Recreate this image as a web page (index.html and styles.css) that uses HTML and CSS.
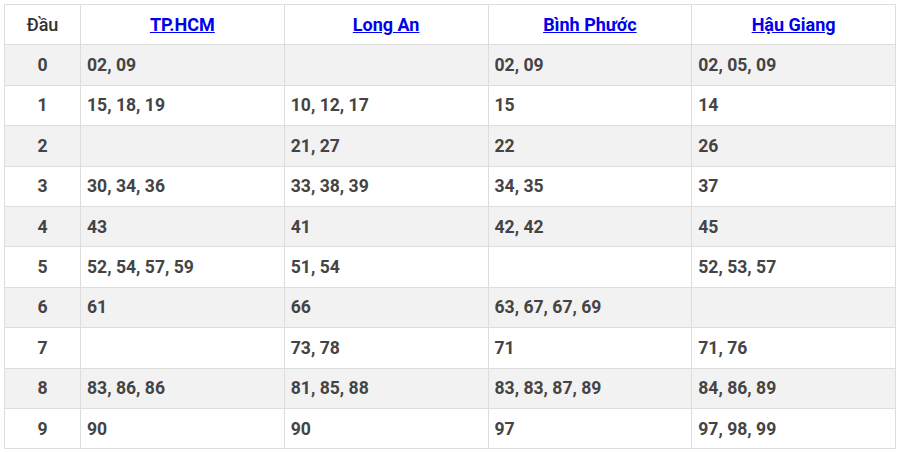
FILE: index.html
```html
<!DOCTYPE html>
<html lang="vi">
<head>
<meta charset="utf-8">
<link rel="stylesheet" href="styles.css">
</head>
<body>
<table class="loto">
  <colgroup><col class="c-head"><col><col><col><col></colgroup>
  <thead>
    <tr><th class="dau">Đầu</th><th><a href="#">TP.HCM</a></th><th><a href="#">Long An</a></th><th><a href="#">Bình Phước</a></th><th><a href="#">Hậu Giang</a></th></tr>
  </thead>
  <tbody>
    <tr><td class="n">0</td><td>02, 09</td><td></td><td>02, 09</td><td>02, 05, 09</td></tr>
    <tr><td class="n">1</td><td>15, 18, 19</td><td>10, 12, 17</td><td>15</td><td>14</td></tr>
    <tr><td class="n">2</td><td></td><td>21, 27</td><td>22</td><td>26</td></tr>
    <tr><td class="n">3</td><td>30, 34, 36</td><td>33, 38, 39</td><td>34, 35</td><td>37</td></tr>
    <tr><td class="n">4</td><td>43</td><td>41</td><td>42, 42</td><td>45</td></tr>
    <tr><td class="n">5</td><td>52, 54, 57, 59</td><td>51, 54</td><td></td><td>52, 53, 57</td></tr>
    <tr><td class="n">6</td><td>61</td><td>66</td><td>63, 67, 67, 69</td><td></td></tr>
    <tr><td class="n">7</td><td></td><td>73, 78</td><td>71</td><td>71, 76</td></tr>
    <tr><td class="n">8</td><td>83, 86, 86</td><td>81, 85, 88</td><td>83, 83, 87, 89</td><td>84, 86, 89</td></tr>
    <tr><td class="n">9</td><td>90</td><td>90</td><td>97</td><td>97, 98, 99</td></tr>
  </tbody>
</table>
</body>
</html>
```
FILE: styles.css
```css
html, body {
  margin: 0;
  padding: 0;
  background: #fff;
}
body {
  padding: 4px 0 0 4px;
  font-family: Roboto, "Liberation Sans", sans-serif;
}
.loto {
  border-collapse: collapse;
  width: 892px;
  table-layout: fixed;
  color: #444;
}
.c-head { width: 76px; }
.loto th, .loto td {
  border: 1px solid #ddd;
  height: 40.4px;
  padding: 0 6px;
  font-size: 17.6px;
  font-weight: 700;
  text-align: left;
  vertical-align: middle;
  box-sizing: border-box;
}
.loto th {
  text-align: center;
}
.loto th.dau {
  font-weight: 500;
  font-size: 18px;
  color: #333;
}
.loto th a {
  color: #0000ee;
  text-decoration: underline;
  font-size: 18px;
}
.loto td.n {
  text-align: center;
}
.loto tbody tr:nth-child(odd) {
  background: #f2f2f2;
}
```
